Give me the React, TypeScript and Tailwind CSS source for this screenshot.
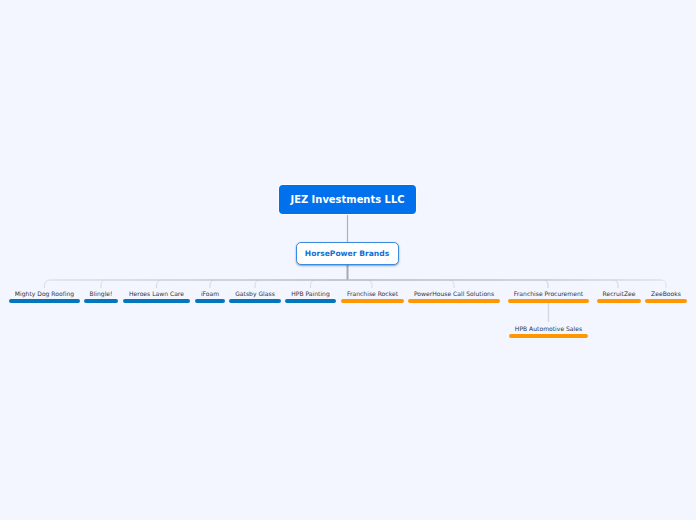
const blue = 'bg-[#0277bd]'
const orange = 'bg-[#ff9800]'

interface Branch {
  label: string
  left: number
  width: number
  bar: string
}

const branches: Branch[] = [
  { label: 'Mighty Dog Roofing', left: 9, width: 71, bar: blue },
  { label: 'Blingle!', left: 84, width: 34, bar: blue },
  { label: 'Heroes Lawn Care', left: 123, width: 67, bar: blue },
  { label: 'iFoam', left: 195, width: 30, bar: blue },
  { label: 'Gatsby Glass', left: 229, width: 52, bar: blue },
  { label: 'HPB Painting', left: 285, width: 51, bar: blue },
  { label: 'Franchise Rocket', left: 341, width: 63, bar: orange },
  { label: 'PowerHouse Call Solutions', left: 408, width: 92, bar: orange },
  { label: 'Franchise Procurement', left: 508, width: 81, bar: orange },
  { label: 'RecruitZee', left: 597, width: 44, bar: orange },
  { label: 'ZeeBooks', left: 645, width: 42, bar: orange },
]

function Leaf({ label, left, width, bar, top }: Branch & { top: number }) {
  return (
    <div className="absolute flex flex-col items-center" style={{ left, width, top }}>
      <span className="h-[11px] text-[6.05px] leading-[12px] whitespace-nowrap text-[#2f343e]">{label}</span>
      <div className={`h-[3.6px] w-full rounded-full ${bar}`}></div>
    </div>
  )
}

function Connectors() {
  return (
    <svg className="absolute inset-0" width="696" height="520" fill="none">
      <defs>
        <linearGradient id="spine" gradientUnits="userSpaceOnUse" x1="44" y1="0" x2="666" y2="0">
          <stop offset="0" stopColor="#dfe2ea" />
          <stop offset="0.48" stopColor="#b5b8bd" />
          <stop offset="0.8" stopColor="#c6c9cf" />
          <stop offset="1" stopColor="#dfe2ea" />
        </linearGradient>
      </defs>
      <path d="M347.500 215V243" stroke="#aab2bf" strokeWidth="1.200" />
      <path d="M347.500 265V280" stroke="#a8aaae" strokeWidth="2" />
      <path d="M548.500 303V322" stroke="#d3d8e0" strokeWidth="1.300" />
      <path d="M101 288V286C101 282 102.500 280 106 280" stroke="#d5d9e1" strokeWidth="1" />
      <path d="M156.500 288V286C156.500 282 158.500 280 162 280" stroke="#d2d6de" strokeWidth="1" />
      <path d="M210 288V286C210 282 211.500 280 215 280" stroke="#d2d6de" strokeWidth="1" />
      <path d="M255 288V286C255 282 256.500 280 260 280" stroke="#d5d9e1" strokeWidth="1" />
      <path d="M310.500 288V286C310.500 282 312 280 315 280" stroke="#d5d9e1" strokeWidth="1" />
      <path d="M372 288V286C372 282 370.500 280 367 280" stroke="#d5d9e1" strokeWidth="1" />
      <path d="M454 288V286C454 282 452.500 280 449 280" stroke="#d5d9e1" strokeWidth="1" />
      <path d="M548 288V286C548 282 546.500 280 543 280" stroke="#c8ccd3" strokeWidth="1" />
      <path d="M618 288V286C618 282 616.500 280 613 280" stroke="#d0d4dc" strokeWidth="1" />
      <path d="M44.500 288V286C44.500 282 46.500 280 50 280" stroke="#d8dbe3" strokeWidth="1" />
      <path d="M666 288V286C666 282 664.500 280 661 280" stroke="#dcdfe7" strokeWidth="1" />
      <path d="M50 280H661" stroke="url(#spine)" strokeWidth="1.500" />
    </svg>
  )
}

export default function App() {
  return (
    <div className="relative h-[520px] w-[696px] overflow-hidden bg-[#f3f6ff] font-['DejaVu_Sans',sans-serif]">
      <Connectors />
      <div className="absolute top-[185px] left-[279px] flex h-[29px] w-[137px] items-center justify-center rounded-[4px] bg-[#0070ec] pt-[1px] text-[9.950px] font-bold text-white shadow-[0_0_1px_1px_rgba(255,255,255,0.7)]">
        JEZ Investments LLC
      </div>
      <div className="absolute top-[242px] left-[295.500px] flex h-[23px] w-[103px] items-center justify-center rounded-[5px] border-[1.5px] border-[#3a8be0] bg-white text-[7.600px] font-bold text-[#0f6fd8] shadow-[0_1px_2px_rgba(40,70,110,0.5)]">
        HorsePower Brands
      </div>
      {branches.map(branch => (
        <Leaf key={branch.label} {...branch} top={288} />
      ))}
      <Leaf label="HPB Automotive Sales" left={509} width={79} bar={orange} top={323} />
    </div>
  )
}
